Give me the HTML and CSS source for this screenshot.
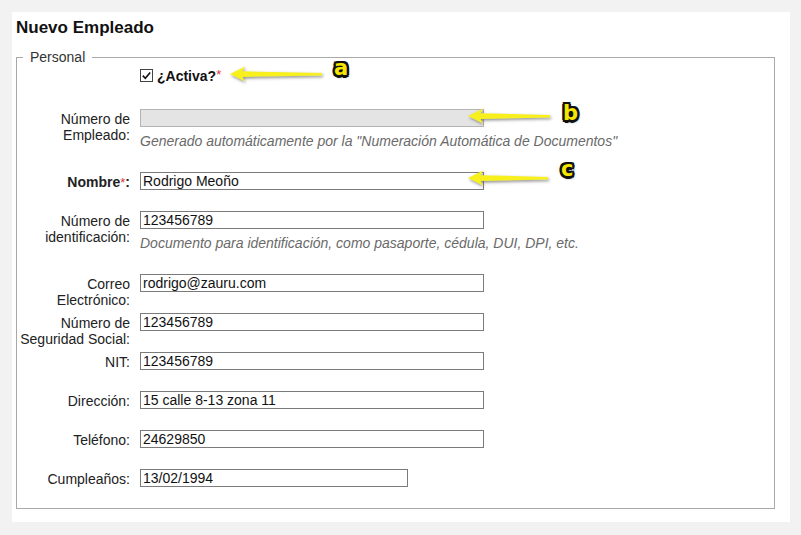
FILE: index.html
```html
<!DOCTYPE html>
<html lang="es">
<head>
  <meta charset="UTF-8">
  <meta name="viewport" content="width=device-width, initial-scale=1.0">
  <title>Nuevo Empleado</title>
  <link rel="stylesheet" href="styles.css">
</head>
<body>
  <div class="panel">
    <h1 class="title">Nuevo Empleado</h1>
    <fieldset class="group">
      <legend>Personal</legend>

      <div class="row row-check">
        <div class="label"></div>
        <div class="field">
          <label class="check">
            <span class="box">
              <svg width="13" height="13" viewBox="0 0 13 13"><rect x="0.5" y="0.5" width="12" height="12" fill="#fff" stroke="#444"/><path d="M2.8 6.6 L5.3 9.2 L10.2 3.4" fill="none" stroke="#111" stroke-width="1.6"/></svg>
            </span>
            <b>¿Activa?</b><span class="req">*</span>
          </label>
        </div>
      </div>

      <div class="row">
        <div class="label">Número de<br>Empleado:</div>
        <div class="field">
          <input class="input" type="text" disabled>
          <div class="hint hint-wide">Generado automáticamente por la "Numeración Automática de Documentos"</div>
        </div>
      </div>

      <div class="row">
        <div class="label"><b>Nombre</b><span class="req">*</span><b>:</b></div>
        <div class="field"><input class="input" type="text" value="Rodrigo Meoño"></div>
      </div>

      <div class="row">
        <div class="label">Número de<br>identificación:</div>
        <div class="field">
          <input class="input" type="text" value="123456789">
          <div class="hint">Documento para identificación, como pasaporte, cédula, DUI, DPI, etc.</div>
        </div>
      </div>

      <div class="row">
        <div class="label">Correo<br>Electrónico:</div>
        <div class="field"><input class="input" type="text" value="rodrigo@zauru.com"></div>
      </div>

      <div class="row">
        <div class="label">Número de<br>Seguridad Social:</div>
        <div class="field"><input class="input" type="text" value="123456789"></div>
      </div>

      <div class="row">
        <div class="label">NIT:</div>
        <div class="field"><input class="input" type="text" value="123456789"></div>
      </div>

      <div class="row">
        <div class="label">Dirección:</div>
        <div class="field"><input class="input" type="text" value="15 calle 8-13 zona 11"></div>
      </div>

      <div class="row">
        <div class="label">Teléfono:</div>
        <div class="field"><input class="input" type="text" value="24629850"></div>
      </div>

      <div class="row">
        <div class="label">Cumpleaños:</div>
        <div class="field"><input class="input input-short" type="text" value="13/02/1994"></div>
      </div>
    </fieldset>

    <!-- callouts -->
    <svg class="arrow arrow-a" width="100" height="26" viewBox="0 0 100 26">
      <defs>
        <filter id="glow" x="-20%" y="-60%" width="140%" height="220%">
          <feDropShadow dx="1" dy="1.5" stdDeviation="1.4" flood-color="#666" flood-opacity="0.75"/>
        </filter>
      </defs>
      <path d="M2 12 L17 4.5 L14.5 9.3 L94 10.9 L94 13.5 L14.5 14.9 L17 19.5 Z" fill="#f7f01a" filter="url(#glow)"/>
    </svg>
    <svg class="arrow arrow-b" width="100" height="26" viewBox="0 0 100 26">
      <path d="M2 12 L17 4.5 L14.5 9.3 L84 10.9 L84 13.5 L14.5 14.9 L17 19.5 Z" fill="#f7f01a" filter="url(#glow)"/>
    </svg>
    <svg class="arrow arrow-c" width="100" height="26" viewBox="0 0 100 26">
      <path d="M2 12 L17 4.5 L14.5 9.3 L82 10.9 L82 13.5 L14.5 14.9 L17 19.5 Z" fill="#f7f01a" filter="url(#glow)"/>
    </svg>
    <span class="badge badge-a">a</span>
    <span class="badge badge-b">b</span>
    <span class="badge badge-c">c</span>
  </div>
</body>
</html>
```

FILE: styles.css
```css
body {
  margin: 0;
  background-color: #f2f2f2;
  font-family: "Liberation Sans", Arial, sans-serif;
  font-size: 14px;
  color: #222;
}

.panel {
  position: relative;
  width: 778px;
  margin: 12px 0 0 12px;
  padding: 6px 15px 13px 4px;
  box-sizing: border-box;
  background: #fff;
}

.title {
  margin: 0 0 11px;
  font-size: 17px;
  line-height: 20px;
  font-weight: bold;
  color: #111;
}

.group {
  margin: 0;
  padding: 0;
  border: 1px solid #a9a9a9;
}

.group legend {
  margin-left: 6px;
  padding: 0 7px;
  line-height: 17px;
  color: #333;
}

.row {
  display: flex;
  gap: 10px;
  min-height: 39px;
}

.row-check {
  height: 43px;
  min-height: 0;
  padding-top: 3px;
  box-sizing: border-box;
}

.label {
  width: 113px;
  flex: none;
  padding-top: 2px;
  line-height: 16px;
  text-align: right;
  color: #222;
}

.field {
  flex: 1;
}

.input {
  display: block;
  width: 344px;
  height: 18px;
  margin: 0;
  padding: 0 2px;
  box-sizing: border-box;
  border: 1px solid #7b7b7b;
  border-radius: 0;
  font-family: "Liberation Sans", Arial, sans-serif;
  font-size: 14px;
  line-height: 16px;
  color: #111;
  background: #fff;
  outline: none;
}

.input:disabled {
  background: #e4e4e4;
  border-color: #b4b4b4;
}

.input-short {
  width: 268px;
}

.hint {
  margin: 6px 0 23px;
  line-height: 16px;
  font-style: italic;
  color: #6a6a6a;
}

.check {
  display: flex;
  align-items: center;
  height: 13px;
  color: #111;
}

.check .box {
  display: block;
  width: 13px;
  height: 13px;
  margin-right: 4px;
}

.check .box svg {
  display: block;
}

.req {
  color: #d8393b;
  font-size: 13px;
}

.check .req {
  align-self: flex-start;
  margin-top: -2px;
}

.arrow {
  position: absolute;
}

.arrow-a {
  left: 216px;
  top: 50px;
}

.arrow-b {
  left: 454px;
  top: 92px;
}

.arrow-c {
  left: 454px;
  top: 154px;
}

.badge {
  position: absolute;
  font-family: "DejaVu Sans", sans-serif;
  font-weight: bold;
  font-size: 21px;
  line-height: 20px;
  color: #f6e600;
  text-shadow:
    2.5px 0 0 #111, -2.5px 0 0 #111, 0 2.5px 0 #111, 0 -2.5px 0 #111,
    2px 2px 0 #111, -2px 2px 0 #111, 2px -2px 0 #111, -2px -2px 0 #111,
    1px 2px 3px rgba(0, 0, 0, 0.6);
}

.badge-a {
  left: 322px;
  top: 46px;
}

.badge-b {
  left: 551px;
  top: 91px;
}

.badge-c {
  left: 549px;
  top: 147px;
}
```
